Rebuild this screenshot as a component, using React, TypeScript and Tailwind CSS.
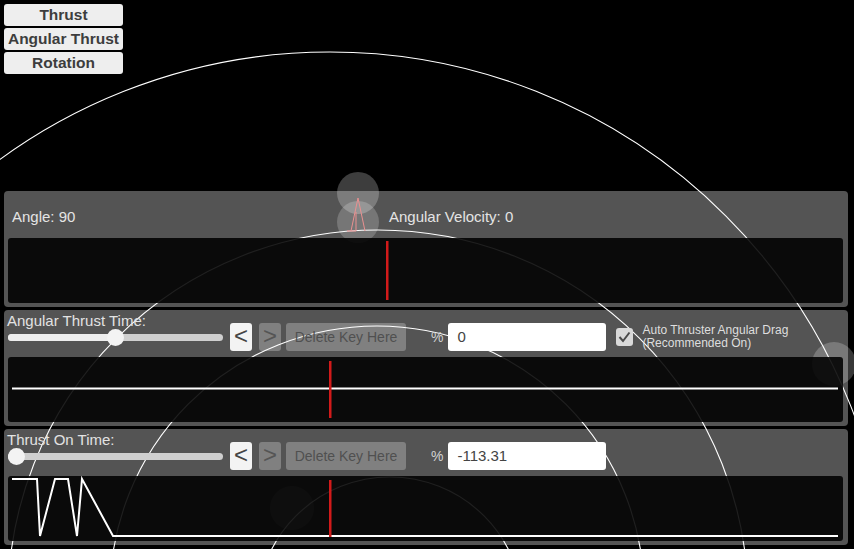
import React from 'react';

const font = "font-['Liberation_Sans',Arial,sans-serif]";

const Scene: React.FC = () => (
  <svg
    className="absolute inset-0"
    width="854"
    height="549"
    viewBox="0 0 854 549"
  >
    {/* ghost discs */}
    <circle cx={358} cy={193} r={21} fill="rgba(255,255,255,0.24)" />
    <circle cx={358} cy={222} r={21} fill="rgba(255,255,255,0.2)" />
    <circle cx={834} cy={364} r={22} fill="rgba(255,255,255,0.22)" />
    <circle cx={292} cy={508} r={22} fill="rgba(255,255,255,0.2)" />
    {/* orbit rings */}
    <circle cx={330} cy={612} r={560} fill="none" stroke="#fff" strokeWidth={1.1} />
    <circle cx={378} cy={600} r={370} fill="none" stroke="#fff" strokeWidth={1.1} />
    <circle cx={377} cy={593} r={267} fill="none" stroke="#fff" strokeWidth={1.1} />
    <circle cx={390} cy={610} r={133} fill="none" stroke="#fff" strokeWidth={1.1} />
    {/* ship */}
    <path
      d="M347 231 L356 231 L356 212 M351 231 L358 198 L365 231"
      fill="none"
      stroke="#e05a5a"
      strokeWidth={1}
    />
  </svg>
);

const Graph: React.FC<{ children?: React.ReactNode }> = ({ children }) => (
  <div className="h-[65px] overflow-hidden rounded-[3px] bg-[rgba(0,0,0,0.88)]">
    <svg width="835" height="65" viewBox="0 0 835 65" className="block">
      {children}
    </svg>
  </div>
);

const Slider: React.FC<{ value: number }> = ({ value }) => {
  const pos = 8.5 + value * (215 - 17);
  return (
    <div className="relative h-[17px] w-[215px]">
      <div className="absolute left-0 right-0 top-[5px] h-[7px] rounded-full bg-[#cfcfcf]" />
      <div
        className="absolute left-0 top-[5px] h-[7px] rounded-full bg-[#ededed]"
        style={{ width: pos }}
      />
      <div
        className="absolute top-0 h-[17px] w-[17px] rounded-full bg-[#f3f3f3]"
        style={{ left: pos - 8.5 }}
      />
    </div>
  );
};

const KeyControls: React.FC<{ value: string; children?: React.ReactNode }> = ({
  value,
  children,
}) => (
  <div className="ml-[7px] mt-[11px] flex h-[28px] items-center">
    <button className="flex h-[28px] w-[22px] items-center justify-center rounded-[3px] bg-[#f3f3f3] pb-[2px] text-[24px] leading-none text-[#444]">
      &lt;
    </button>
    <button className="ml-[7px] flex h-[28px] w-[22px] items-center justify-center rounded-[3px] bg-[rgba(255,255,255,0.26)] pb-[2px] text-[24px] leading-none text-[#555]">
      &gt;
    </button>
    <button className="ml-[5px] h-[28px] w-[120px] rounded-[3px] bg-[rgba(255,255,255,0.26)] text-[14px] text-[#505050]">
      Delete Key Here
    </button>
    <span className="ml-[25px] text-[14px] text-[#d2d2d2]">%</span>
    <div className="ml-[5px] h-[28px] w-[158px] rounded-[3px] bg-white pl-[9px] text-[15px] leading-[28px] text-[#444]">
      {value}
    </div>
    {children}
  </div>
);

const TimePanel: React.FC<{
  label: string;
  slider: number;
  value: string;
  extra?: React.ReactNode;
  children?: React.ReactNode;
}> = ({ label, slider, value, extra, children }) => (
  <div className="flex h-[116px] flex-col rounded-[4px] bg-[rgba(255,255,255,0.33)] pb-[4px] pl-[4px] pr-[5px] pt-[2px]">
    <div className="flex h-[45px] items-start">
      <div className="w-[215px]">
        <div className="-ml-[1px] h-[17px] whitespace-nowrap text-[15px] leading-[17px] text-[#e2e2e2]">
          {label}
        </div>
        <Slider value={slider} />
      </div>
      <KeyControls value={value}>{extra}</KeyControls>
    </div>
    <Graph>{children}</Graph>
  </div>
);

export default function App() {
  return (
    <div className={`relative h-[549px] w-full overflow-hidden bg-black ${font}`}>
      <Scene />
      <div className="relative flex h-full flex-col">
        <div className="flex flex-col gap-[2px] p-[4px]">
          {['Thrust', 'Angular Thrust', 'Rotation'].map((t) => (
            <button
              key={t}
              className="h-[22px] w-[119px] rounded-[3px] bg-[#eeeeee] text-center text-[15.5px] font-bold leading-[22px] text-[#3d3d3d]"
            >
              {t}
            </button>
          ))}
        </div>

        <div className="mt-auto flex flex-col gap-[3px] pb-[4px] pl-[4px] pr-[6px]">
          {/* state panel */}
          <div className="flex h-[116px] flex-col rounded-[4px] bg-[rgba(255,255,255,0.33)] pb-[4px] pl-[4px] pr-[5px] pt-[2px]">
            <div className="flex h-[45px] items-center pt-[3px] text-[15px] text-[#e4e4e4]">
              <div className="w-[381px] pl-[4px]">Angle: 90</div>
              <div>Angular Velocity: 0</div>
            </div>
            <Graph>
              <rect x={378} y={3} width={2.5} height={59} fill="#d21a1a" />
            </Graph>
          </div>

          <TimePanel
            label="Angular Thrust Time:"
            slider={0.5}
            value="0"
            extra={
              <>
                <div className="ml-[10px] flex h-[18px] w-[17px] items-center justify-center rounded-[3px] bg-[#d9d9d9]">
                  <svg width="13" height="12" viewBox="0 0 13 12">
                    <polyline
                      points="1.5,6 5,10 11.5,1.5"
                      fill="none"
                      stroke="#4a4a4a"
                      strokeWidth={2}
                    />
                  </svg>
                </div>
                <div className="ml-[9px] text-[12px] leading-[13.5px] text-[#dedede]">
                  <div>Auto Thruster Angular Drag</div>
                  <div>(Recommended On)</div>
                </div>
              </>
            }
          >
            <line x1={4} y1={31.5} x2={830} y2={31.5} stroke="#fff" strokeWidth={2} />
            <rect x={321} y={4} width={2.5} height={57} fill="#d21a1a" />
          </TimePanel>

          <TimePanel label="Thrust On Time:" slider={0} value="-113.31">
            <polyline
              points="4,3 29,3 32,60 47,3 60,3 69,60 74,3 105,60 830,60"
              fill="none"
              stroke="#fff"
              strokeWidth={2}
            />
            <rect x={321} y={4} width={2.5} height={57} fill="#d21a1a" />
          </TimePanel>
        </div>
      </div>
    </div>
  );
}
